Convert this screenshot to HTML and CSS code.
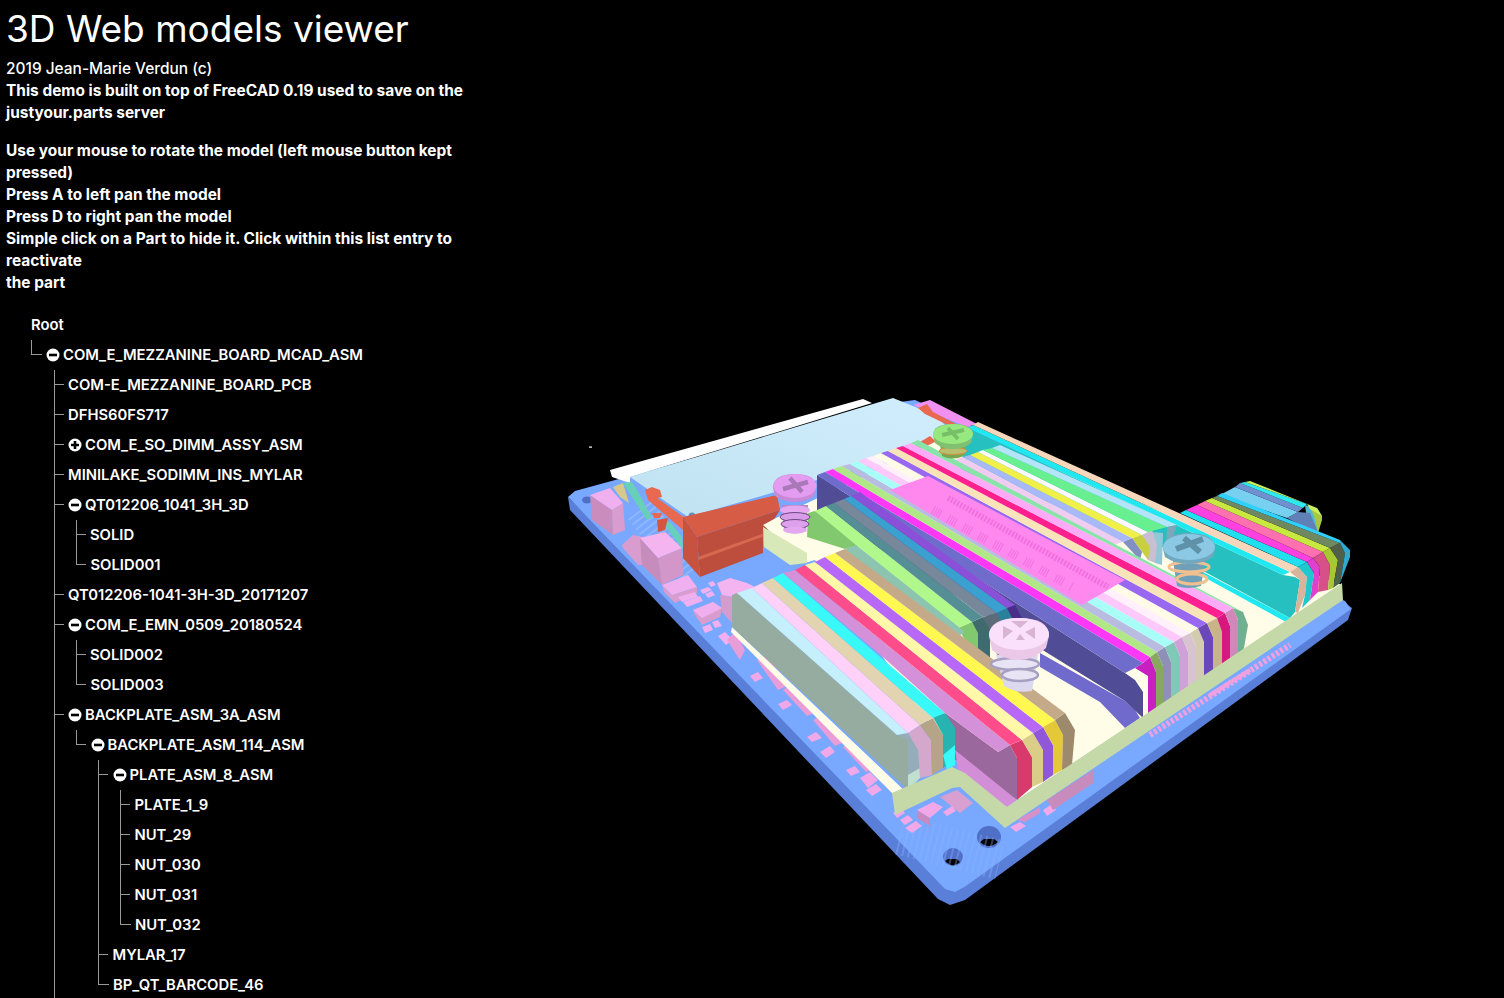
FILE: index.html
```html
<!DOCTYPE html>
<html lang="en">
<head>
<meta charset="utf-8">
<title>3D Web models viewer</title>
<link rel="stylesheet" href="styles.css">
</head>
<body>
<main class="page">
<section class="info">
<h1>3D Web models viewer</h1>
<p><span class="light">2019 Jean-Marie Verdun (c)</span><br>This demo is built on top of FreeCAD 0.19 used to save on the justyour.parts server</p>
<p>Use your mouse to rotate the model (left mouse button kept pressed)<br>Press A to left pan the model<br>Press D to right pan the model<br>Simple click on a Part to hide it. Click within this list entry to reactivate<br>the part</p>
<div class="tree">
<div class="root">Root</div>
<ul class="top">
<li class="end"><div class="row"><span class="tick"></span><svg class="ico" viewBox="0 0 14 14"><circle cx="7" cy="7" r="6.5" fill="#fff"/><rect x="3" y="5.7" width="8" height="2.6" fill="#000"/></svg>COM_E_MEZZANINE_BOARD_MCAD_ASM</div>
<ul>
<li><div class="row"><span class="tick"></span>COM-E_MEZZANINE_BOARD_PCB</div></li>
<li><div class="row"><span class="tick"></span>DFHS60FS717</div></li>
<li><div class="row"><span class="tick"></span><svg class="ico" viewBox="0 0 14 14"><circle cx="7" cy="7" r="6.5" fill="#fff"/><path d="M3 5.7h2.7V3h2.6v2.7H11v2.6H8.300V11H5.700V8.300H3z" fill="#000"/></svg>COM_E_SO_DIMM_ASSY_ASM</div></li>
<li><div class="row"><span class="tick"></span>MINILAKE_SODIMM_INS_MYLAR</div></li>
<li><div class="row"><span class="tick"></span><svg class="ico" viewBox="0 0 14 14"><circle cx="7" cy="7" r="6.5" fill="#fff"/><rect x="3" y="5.7" width="8" height="2.6" fill="#000"/></svg>QT012206_1041_3H_3D</div>
<ul>
<li><div class="row"><span class="tick"></span>SOLID</div></li>
<li class="end"><div class="row"><span class="tick"></span>SOLID001</div></li>
</ul></li>
<li><div class="row"><span class="tick"></span>QT012206-1041-3H-3D_20171207</div></li>
<li><div class="row"><span class="tick"></span><svg class="ico" viewBox="0 0 14 14"><circle cx="7" cy="7" r="6.5" fill="#fff"/><rect x="3" y="5.7" width="8" height="2.6" fill="#000"/></svg>COM_E_EMN_0509_20180524</div>
<ul>
<li><div class="row"><span class="tick"></span>SOLID002</div></li>
<li class="end"><div class="row"><span class="tick"></span>SOLID003</div></li>
</ul></li>
<li><div class="row"><span class="tick"></span><svg class="ico" viewBox="0 0 14 14"><circle cx="7" cy="7" r="6.5" fill="#fff"/><rect x="3" y="5.7" width="8" height="2.6" fill="#000"/></svg>BACKPLATE_ASM_3A_ASM</div>
<ul>
<li class="end"><div class="row"><span class="tick"></span><svg class="ico" viewBox="0 0 14 14"><circle cx="7" cy="7" r="6.5" fill="#fff"/><rect x="3" y="5.7" width="8" height="2.6" fill="#000"/></svg>BACKPLATE_ASM_114_ASM</div>
<ul>
<li><div class="row"><span class="tick"></span><svg class="ico" viewBox="0 0 14 14"><circle cx="7" cy="7" r="6.5" fill="#fff"/><rect x="3" y="5.7" width="8" height="2.6" fill="#000"/></svg>PLATE_ASM_8_ASM</div>
<ul>
<li><div class="row"><span class="tick"></span>PLATE_1_9</div></li>
<li><div class="row"><span class="tick"></span>NUT_29</div></li>
<li><div class="row"><span class="tick"></span>NUT_030</div></li>
<li><div class="row"><span class="tick"></span>NUT_031</div></li>
<li class="end"><div class="row"><span class="tick"></span>NUT_032</div></li>
</ul></li>
<li><div class="row"><span class="tick"></span>MYLAR_17</div></li>
<li class="end"><div class="row"><span class="tick"></span>BP_QT_BARCODE_46</div></li>
</ul></li>
</ul></li>
</ul></li>
</ul>
</div>
</section>
<svg class="viewer" viewBox="480 0 1024 998" aria-label="3D board model">
<defs>
<linearGradient id="cardShade" x1="0" y1="1" x2="1" y2="0"><stop offset="0" stop-color="#bfe2f0"/><stop offset="1" stop-color="#d2eeff"/></linearGradient>
</defs>
<rect x="589" y="446.500" width="3" height="1.200" fill="#fff"/>
<!-- board -->
<polygon fill="#5a7fd8" points="568,497 570,510 938,899 950,905 965,900 1348,620 1352,608 1340,600 950,880"/>
<polygon fill="#78a8ff" points="568,497 575,491 900,402 915,400 1345,601 1351,609 966,886 955,892 945,889"/>
<ellipse cx="587" cy="500" rx="5" ry="3.500" fill="#5070c8"/>
<ellipse cx="953" cy="857" rx="10" ry="9" fill="#5070c8"/><path d="M945 861q8 8 15 1l-3-3h-9z" fill="#000"/>
<ellipse cx="989" cy="837" rx="12" ry="11" fill="#5070c8"/><path d="M980 842q9 8 18 0l-4-3h-10z" fill="#000"/>
<polyline points="1150,735 1290,645" fill="none" stroke="#f0a0e0" stroke-width="6" stroke-dasharray="3 2"/>
<polyline points="1210,695 1250,670" fill="none" stroke="#f0a0e0" stroke-width="4"/>
<polyline points="640,510 690,575" fill="none" stroke="#a0c0ff" stroke-width="30" stroke-dasharray="2 4" opacity=".6"/>
<polyline points="900,835 1000,860" fill="none" stroke="#90b4ff" stroke-width="40" stroke-dasharray="2 4" opacity=".35"/>
<!-- components -->
<polygon fill="#ca8cbc" points="590,495 612,510 613,535 592,520"/><polygon fill="#d99ccf" points="612,510 623,503 625,530 613,535"/><polygon fill="#f0b0f0" points="590,495 610,488 623,503 612,510"/>
<polygon fill="#d99ccf" points="622,545 633,535 643,537 642,565 638,565 623,548"/>
<polygon fill="#c58cbc" points="640,538 658,558 662,585 642,565"/><polygon fill="#d396c8" points="658,558 682,548 683,575 662,585"/><polygon fill="#f4b4f0" points="640,538 665,532 682,548 658,558"/>
<polygon fill="#d99ccf" points="662,585 672,595 697,587 697,593 675,603 664,592"/><polygon fill="#f0b0f0" points="662,585 688,575 697,587 672,595"/>
<polygon fill="#f0b0f0" points="678,597 695,592 698,597 682,602"/><polygon fill="#f0b0f0" points="683,602 700,596 703,601 687,607"/>
<polygon fill="#d99ccf" points="693,610 695,615 702,625 720,617 722,608 713,602"/><polygon fill="#f0b0f0" points="693,610 713,602 722,608 702,618"/>
<polygon fill="#f0b0f0" points="700,590 708,587 712,590 703,594"/><polygon fill="#f0b0f0" points="708,583 713,581 716,585 711,587"/><polygon fill="#f0b0f0" points="705,594 712,591 715,595 708,598"/>
<polygon fill="#d39ccc" points="720,595 732,597 732,623 722,612"/><polygon fill="#f4b4f0" points="717,583 730,578 747,583 757,588 733,597 722,595"/>
<polygon fill="#f0b0f0" points="702,627 710,624 713,630 705,633"/><polygon fill="#f0b0f0" points="712,622 718,620 722,626 715,628"/><polygon fill="#f0b0f0" points="718,636 725,632 733,640 726,645"/>
<polygon fill="#e89cd8" points="727,640 735,632 745,650 740,660"/>
<polygon fill="#f0a8e8" points="750,676 758,672 763,678 755,682"/>
<polygon fill="#e89cd8" points="757,660 765,655 790,685 778,690"/>
<polygon fill="#f0a8e8" points="778,704 787,700 792,705 783,710"/><polygon fill="#e89cd8" points="783,690 790,685 817,712 807,716"/>
<polygon fill="#f0a8e8" points="807,737 816,732 822,738 812,742"/>
<polygon fill="#e89cd8" points="813,720 820,716 845,742 835,746"/><polygon fill="#f0a8e8" points="820,752 830,746 835,752 826,758"/>
<polygon fill="#e89cd8" points="843,747 850,742 876,768 866,772"/><polygon fill="#f0a8e8" points="846,770 855,766 860,772 851,776"/><polygon fill="#f0a8e8" points="860,778 870,772 878,780 868,788"/><polygon fill="#f0a8e8" points="866,790 876,784 882,790 872,796"/>
<polygon fill="#f0a8e8" points="893,813 901,808 905,813 897,818"/><polygon fill="#f0a8e8" points="900,820 908,815 913,820 905,825"/><polygon fill="#f0a8e8" points="905,828 916,821 922,826 912,833"/>
<polygon fill="#d8a0d0" points="940,797 957,790 973,803 960,813"/>
<polygon fill="#c888c0" points="917,810 930,818 930,826 917,818"/><polygon fill="#f0a8e8" points="917,810 933,802 943,807 930,818"/><polygon fill="#f0a8e8" points="943,812 952,806 956,811 947,816"/>
<polygon fill="#f0a8e8" points="1010,827 1020,822 1026,826 1016,832"/>
<polygon fill="#d890c8" points="1017,820 1040,807 1040,813 1025,822"/>
<polygon fill="#f0a8e8" points="1043,810 1052,804 1056,810 1047,816"/>
<polygon fill="#c88cbc" points="1047,800 1093,770 1093,783 1053,810"/>
<!-- memory card -->
<polygon fill="#fff" points="610,470 863,399 872,403 630,477 630,483 612,477"/>
<polygon fill="url(#cardShade)" points="630,477 893,398 935,415 960,440 817,480 688,517"/>
<circle cx="692" cy="516" r="3.500" fill="#6090c0"/>
<polygon fill="#d9c88c" points="613,487 623,483 629,503 620,497"/>
<polygon fill="#68d0b8" points="623,483 632,482 637,490 652,518 647,520"/>
<polygon fill="#68d0b8" points="663,523 670,522 682,537 683,550 676,540"/>
<polygon fill="#e86850" points="645,490 652,487 660,490 662,497 657,498 685,518 683,530 648,500"/>
<polygon fill="#e86850" points="652,513 662,513 660,518 654,518"/>
<polygon fill="#d4563e" points="657,520 668,518 665,530 658,532"/>
<polygon fill="#d65c46" points="683,517 777,495 780,510 697,537"/>
<polygon fill="#c85240" points="683,517 697,537 700,577 683,558"/>
<polygon fill="#bd4d3c" points="697,537 780,510 763,537 763,553 700,577"/>
<polygon fill="#d66a50" points="698,557 765,533 765,536 699,560"/>
<polygon fill="#f090f0" points="913,405 930,400 977,424 967,427"/><polygon fill="#e86850" points="918,408 927,404 933,412 960,426 950,426 925,414"/>
<polygon fill="#e86850" points="915,445 930,436 945,450 935,458"/>
<!-- plate -->
<polygon fill="#fffde8" points="776,518 960,430 1342,585 1007,807 955,760 815,560 805,563 763,525"/>
<polygon fill="#d8e8b8" points="763,527 807,553 807,563 790,565 764,547"/>
<!-- rear right groups -->
<polygon fill="#50b8d0" points="1305,505 1312,507 1320,518 1318,532 1308,528"/>
<polygon fill="#6080b8" points="1287,518 1298,512 1310,513 1318,532 1310,530"/>
<polygon fill="#a8c840" points="1310,508 1317,508 1322,516 1322,520 1318,533 1314,516"/>
<polygon fill="#78d0f0" points="1220,495 1235,487 1298,512 1287,518"/>
<polygon fill="#7090d0" points="1235,487 1240,483 1303,508 1298,512"/>
<polygon fill="#30e8f0" points="1240,483 1245,482 1307,504 1303,508"/>
<polygon fill="#c8f060" points="1245,482 1250,481 1317,508 1322,516 1310,509 1307,504"/>
<polygon fill="#26c0c0" points="968,428 1283,575 1295,577 1300,580 1295,612 1290,618 1205,572 1150,540 960,470"/>
<polygon fill="#20e8f0" points="1203,572 1290,618 1286,622 1200,575"/>
<polygon fill="#20e8f0" points="968,428 973,425 1290,572 1283,575"/>
<polygon fill="#f6d7bc" points="973,425 978,422 1298,567 1290,572"/>
<polygon fill="#d8b49c" points="1290,572 1298,567 1307,577 1305,595 1298,613 1295,612 1300,580"/>
<polygon fill="#1ec8cc" points="1298,567 1307,562 1314,573 1310,600 1302,608 1305,595 1307,577"/>
<polygon fill="#20e0f0" points="1180,513 1186,510 1307,562 1298,567"/>
<polygon fill="#e040d0" points="1307,562 1313,558 1320,567 1318,592 1310,600 1314,573"/>
<polygon fill="#ff40e0" points="1186,510 1197,505 1313,558 1307,562"/>
<polygon fill="#d85088" points="1313,558 1323,552 1330,565 1328,590 1318,592 1320,567"/>
<polygon fill="#ff70b0" points="1197,505 1205,501 1323,552 1313,558"/>
<polygon fill="#a8c830" points="1323,552 1330,548 1338,560 1333,588 1328,590 1330,565"/>
<polygon fill="#c8e840" points="1205,501 1212,498 1330,548 1323,552"/>
<polygon fill="#505f48" points="1330,548 1340,543 1345,553 1340,583 1333,588 1338,560"/>
<polygon fill="#708860" points="1212,498 1217,496 1340,543 1330,548"/>
<polygon fill="#30a8d0" points="1340,540 1350,550 1350,557 1340,583 1345,553 1340,543"/>
<polygon fill="#30d0f8" points="1217,496 1222,493 1340,540 1340,543"/>
<!-- group E -->
<polygon fill="#90c8d8" points="1150,532 1163,533 1162,565 1155,563"/>
<polygon fill="#c8c0d0" points="1140,535 1152,530 1157,545 1155,563 1148,560"/>
<polygon fill="#c8d040" points="1132,538 1142,535 1150,547 1148,560"/>
<polygon fill="#8090c0" points="1123,542 1132,538 1142,552 1140,560"/>
<polygon fill="#f0ccf0" points="955,460 963,457 1123,542 1113,545"/>
<polygon fill="#a8b8f8" points="963,457 970,455 1132,538 1123,542"/>
<polygon fill="#f0f048" points="970,455 978,452 1142,535 1132,538"/>
<polygon fill="#fff8ff" points="978,452 983,450 1148,532 1142,535"/>
<polygon fill="#68f090" points="983,450 992,448 1167,527 1148,532"/>
<polygon fill="#b4e4f8" points="992,448 1000,445 1177,525 1167,527"/>
<polygon fill="#7aa8b8" points="1167,527 1177,525 1172,540 1166,545"/>
<!-- group B -->
<polygon fill="#6f6acb" points="1040,653 1125,701 1135,710 1140,718 1125,728 1100,702 1040,667"/>
<polygon fill="#504c96" points="817,475 1125,673 1135,680 1143,692 1143,718 1125,701 817,510"/>
<polygon fill="#c820c0" points="1143,663 1150,657 1156,672 1156,712 1148,717 1148,676 1135,668"/>
<polygon fill="#88a860" points="1150,657 1157,652 1163,666 1163,707 1156,712 1156,672"/>
<polygon fill="#8f90b8" points="1157,652 1165,647 1171,662 1171,702 1163,707 1163,666"/>
<polygon fill="#80c8b8" points="1165,647 1174,642 1180,656 1180,696 1171,702 1171,662"/>
<polygon fill="#d0a0d8" points="1174,642 1182,637 1188,652 1188,691 1180,696 1180,656"/>
<polygon fill="#d8c4d0" points="1182,637 1190,633 1196,646 1196,686 1188,691 1188,652"/>
<polygon fill="#d4ccb0" points="1190,633 1198,628 1204,642 1204,681 1196,686 1196,646"/>
<polygon fill="#6a48b8" points="1198,628 1207,623 1213,637 1213,675 1204,681 1204,642"/>
<polygon fill="#c8b488" points="1207,623 1217,618 1222,632 1222,670 1213,675 1213,637"/>
<polygon fill="#d81880" points="1217,618 1225,613 1230,626 1230,664 1222,670 1222,632"/>
<polygon fill="#d088b8" points="1225,613 1233,608 1238,620 1238,659 1230,664 1230,626"/>
<polygon fill="#70b090" points="1233,608 1243,612 1248,625 1244,648 1238,659 1238,620"/>
<polygon fill="#706ccc" points="817,475 825,472 1143,663 1135,668 1125,673"/>
<polygon fill="#ff38f8" points="825,472 833,469 1150,657 1143,663"/>
<polygon fill="#b0e888" points="833,469 842,466 1157,652 1150,657"/>
<polygon fill="#b8bce0" points="842,466 850,464 1165,647 1157,652"/>
<polygon fill="#a8fff8" points="850,464 858,461 1174,642 1165,647"/>
<polygon fill="#ffc8fa" points="858,461 866,458 1182,637 1174,642"/>
<polygon fill="#fff0fc" points="866,458 873,456 1190,633 1182,637"/>
<polygon fill="#fffbe6" points="873,456 881,453 1198,628 1190,633"/>
<polygon fill="#9868f0" points="881,453 888,451 1207,623 1198,628"/>
<polygon fill="#f8e4b8" points="888,451 896,448 1217,618 1207,623"/>
<polygon fill="#ff2090" points="896,448 903,446 1225,613 1217,618"/>
<polygon fill="#ffaaf8" points="903,446 911,443 1233,608 1225,613"/>
<polygon fill="#88e4a8" points="911,443 918,440 1243,612 1233,608"/>
<!-- label -->
<polygon fill="#ff88ee" points="890,490 928,476 1125,580 1082,605"/>
<g fill="none" stroke="#f070e0">
<polyline points="948,498 1108,587" stroke-width="6" stroke-dasharray="2 1.500"/>
<polyline points="933,510 1072,587" stroke-width="9" stroke-dasharray="1 1.500 1 1.500 1 1.500 1 9"/>
</g>
<!-- group C -->
<polygon fill="#4a2f8a" points="1007,608 1015,605 1022,618 1020,640 1010,628"/>
<polygon fill="#2a7f9a" points="997,613 1007,608 1013,620 1010,650 1000,630"/>
<polygon fill="#5b6b7a" points="983,617 997,613 1003,626 1000,660 990,640"/>
<polygon fill="#3f6a6e" points="972,622 983,617 990,630 990,665 978,650"/>
<polygon fill="#82c86e" points="958,628 972,622 978,633 978,650 965,640"/>
<polygon fill="#82c86e" points="808,513 815,511 860,545 845,549 807,537"/>
<polygon fill="#b0f88c" points="815,511 826,506 972,622 958,628 856,545"/>
<polygon fill="#558f95" points="826,506 834,503 983,617 972,622"/>
<polygon fill="#76889a" points="834,503 844,499 997,613 983,617"/>
<polygon fill="#3aa0d0" points="844,499 851,496 1007,608 997,613"/>
<polygon fill="#8a50d8" points="851,496 860,492 1015,605 1007,608"/>
<polygon fill="#8cc4b0" points="845,549 856,545 965,632 952,640"/>
<!-- lower plate strip -->
<polygon fill="#fffde8" points="732,627 907,793 892,793 731,632"/>
<!-- group A -->
<polygon fill="#9a689c" points="945,713 998,752 1010,745 1017,758 1017,800 955,760"/>
<polygon fill="#d28fd8" points="955,750 1017,800 1007,807 958,770"/>
<polygon fill="#94adb8" points="897,735 908,733 918,750 920,778 908,790"/>
<polygon fill="#c0e0d0" points="908,775 920,768 920,778 908,790"/>
<polygon fill="#d4a8cc" points="908,733 920,725 931,740 932,775 920,778 918,750"/>
<polygon fill="#b5a487" points="920,725 933,718 943,735 943,768 932,775 931,740"/>
<polygon fill="#27b3b0" points="933,717 945,713 955,728 955,760 943,768 943,735"/>
<polygon fill="#38f8f8" points="943,755 955,745 955,765 947,770"/>
<polygon fill="#d83b6b" points="1010,745 1022,740 1032,757 1032,787 1017,800 1017,758"/>
<polygon fill="#d9cd87" points="1022,740 1033,733 1043,750 1043,782 1032,787 1032,757"/>
<polygon fill="#9058d8" points="1033,733 1043,727 1053,745 1053,775 1043,782 1043,750"/>
<polygon fill="#e5c838" points="1043,727 1055,720 1063,735 1062,770 1053,775 1053,745"/>
<polygon fill="#9d8a6c" points="1055,720 1065,713 1075,730 1072,765 1062,770 1063,735"/>
<polygon fill="#96aca0" points="732,595 737,593 897,735 908,740 908,790 732,627"/>
<polygon fill="#c4effb" points="737,593 752,588 908,733 897,735"/>
<polygon fill="#ffd0f8" points="752,588 762,583 920,725 908,733"/>
<polygon fill="#e2d4b0" points="762,583 773,578 933,718 920,725"/>
<polygon fill="#38f8f8" points="773,578 783,573 945,713 933,718"/>
<polygon fill="#d490d8" points="783,573 795,570 1010,745 998,752 945,713 883,657"/>
<polygon fill="#ff4d8c" points="795,570 805,565 1022,740 1010,745"/>
<polygon fill="#fff8a8" points="805,565 815,562 1033,733 1022,740"/>
<polygon fill="#b868f8" points="815,562 825,557 1043,727 1033,733"/>
<polygon fill="#fff850" points="825,557 835,553 1055,720 1043,727"/>
<polygon fill="#c4aa88" points="835,553 845,549 1065,713 1055,720"/>
<!-- plate front -->
<polygon fill="#c5d8a8" points="892,793 952,767 965,773 1007,807 1342,583 1343,600 1005,828 960,787 952,788 895,815"/>
<!-- screws -->
<g>
<path d="M782 505h26l-2 26q-11 5-22 0z" fill="#b884c8"/>
<ellipse cx="795" cy="510" rx="15" ry="4.500" fill="#e3a8f0"/><ellipse cx="795" cy="517" rx="15" ry="4.500" fill="#d89ce8" stroke="#704880"/><ellipse cx="795" cy="524" rx="14" ry="4.500" fill="#dca0ec" stroke="#704880"/><ellipse cx="795" cy="530" rx="12" ry="3.500" fill="#e3a8f0"/>
<path d="M773 488q0-14 22-14t21 14l-2 8q-8 6-19 6t-20-6z" fill="#c88ad8"/><ellipse cx="795" cy="486" rx="21.500" ry="12" fill="#e49cf0"/>
<path d="M783 489l25-7M790 478l12 14" stroke="#a878b8" stroke-width="4.500" fill="none"/>
</g>
<g>
<path d="M940 445h26l-2 11q-12 5-22 0z" fill="#7aa850"/><ellipse cx="953" cy="451" rx="14" ry="3.500" fill="#b8c070" stroke="#d09040"/>
<path d="M933 435q0-11 20-11t20 11l-2 8q-7 6-18 6t-18-6z" fill="#80c070"/><ellipse cx="953" cy="434" rx="20" ry="10" fill="#98e880"/>
<path d="M942 435l22-5M948 428l10 11" stroke="#78c068" stroke-width="4" fill="none"/>
</g>
<g>
<path d="M1172 555h34l-5 31q-14 4-24 0z" fill="#70a0b8"/>
<ellipse cx="1189" cy="567" rx="20" ry="5" fill="none" stroke="#f0c090" stroke-width="3"/><ellipse cx="1192" cy="579" rx="15" ry="5" fill="none" stroke="#f0c090" stroke-width="3"/>
<path d="M1163 549q0-16 26-16t26 16l-2 8q-10 7-24 7t-24-7z" fill="#70a8c0"/><ellipse cx="1189" cy="547" rx="26" ry="13" fill="#8ac8e4"/>
<path d="M1176 549l27-10M1184 538l16 14" stroke="#5f92a8" stroke-width="6" fill="none"/>
</g>
<g>
<path d="M996 655h42l-6 36q-16 3-28-5z" fill="#dcd8f0"/>
<ellipse cx="1015" cy="664" rx="24" ry="6" fill="#e8e4f6" stroke="#a8a0c0" stroke-width="2.500"/><ellipse cx="1020" cy="675" rx="18" ry="6" fill="#e8e4f6" stroke="#a8a0c0" stroke-width="2.500"/>
<path d="M989 636q0-18 30-18t30 18l-3 12q-12 12-27 12t-27-10z" fill="#ecc8e8"/><ellipse cx="1019" cy="634" rx="30" ry="16" fill="#fbe0fb"/>
<path d="M1003 626l10 5-10 8zM1035 627l-10 5 10 7zM1011 621h17l-8 7zM1016 640l4-6 5 6z" fill="#d8b4d4"/>
</g>
</svg>
</main>
</body>
</html>
```
FILE: styles.css
```css
html, body {
  margin: 0;
  height: 100%;
  background: #000;
  overflow: hidden;
}
.page {
  display: flex;
  height: 998px;
  overflow: hidden;
  font-family: Inter, "Liberation Sans", sans-serif;
  color: #fff;
}
.info {
  flex: 0 0 480px;
  box-sizing: border-box;
  padding-left: 6px;
  font-size: 15.45px;
  font-weight: 700;
  line-height: 22px;
}
.viewer {
  flex: 0 0 1024px;
  width: 1024px;
  height: 998px;
  display: block;
}
h1 {
  margin: 0;
  height: 58px;
  font-size: 37px;
  line-height: 57px;
  font-weight: 400;
}
p {
  margin: 0 0 16px;
  width: 470px;
}
.light { font-weight: 500; }
.tree {
  font-size: 14.8px;
  font-weight: 600;
}
.root {
  height: 30px;
  line-height: 30px;
  padding-left: 25px;
}
.tree ul {
  list-style: none;
  margin: 0;
  padding: 0;
}
.tree .top { margin-left: 25px; }
.tree li ul { margin-left: 21px; }
.tree li.end > ul { margin-left: 22.5px; }
.tree li {
  border-left: 1.5px solid #9a9a9a;
}
.tree li.end { border-left: 0; }
.row {
  display: flex;
  align-items: flex-start;
  height: 30px;
  line-height: 30px;
  white-space: nowrap;
}
.tick {
  flex: 0 0 auto;
  box-sizing: border-box;
  width: 9px;
  height: 15px;
  margin-right: 4.5px;
  border-bottom: 1.5px solid #9a9a9a;
}
.end > .row > .tick {
  width: 10.5px;
  border-left: 1.5px solid #9a9a9a;
}
.ico {
  flex: 0 0 auto;
  width: 14px;
  height: 14px;
  margin: 8px 3px 0 0;
}
```
